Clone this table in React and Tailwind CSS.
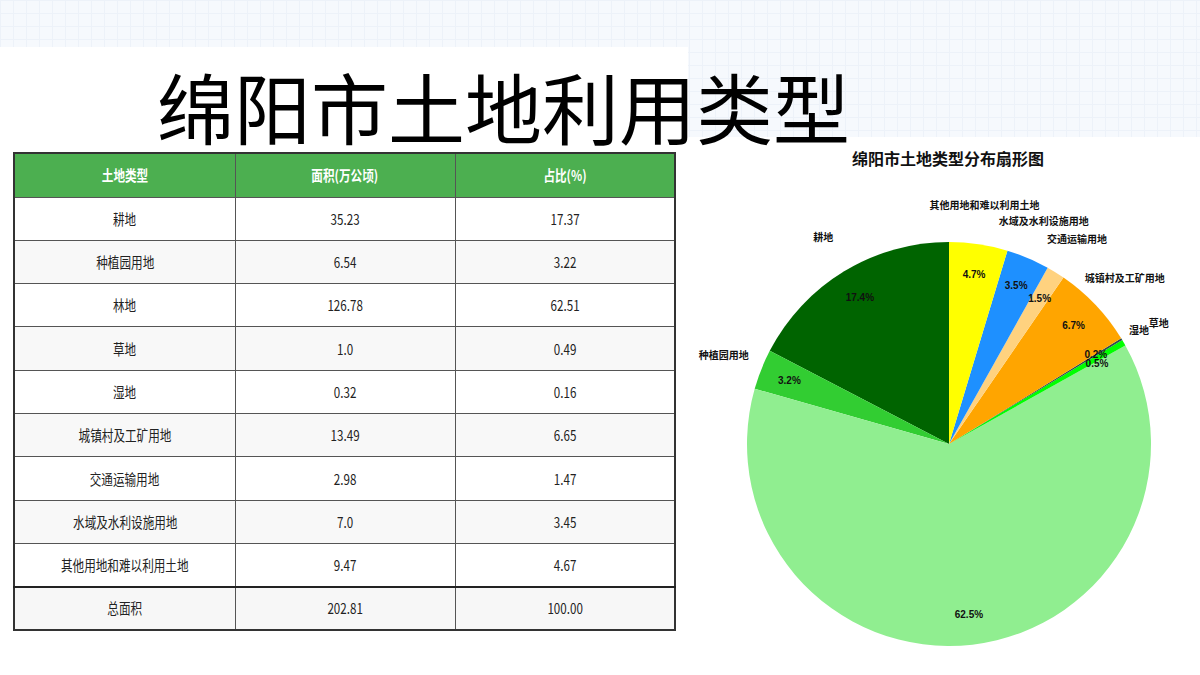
import React from "react";

const rows = [
  ["耕地", "35.23", "17.37"],
  ["种植园用地", "6.54", "3.22"],
  ["林地", "126.78", "62.51"],
  ["草地", "1.0", "0.49"],
  ["湿地", "0.32", "0.16"],
  ["城镇村及工矿用地", "13.49", "6.65"],
  ["交通运输用地", "2.98", "1.47"],
  ["水域及水利设施用地", "7.0", "3.45"],
  ["其他用地和难以利用土地", "9.47", "4.67"],
];

const slices = [
  { name: "耕地", v: 17.37, color: "#006400", pct: "17.4%" },
  { name: "种植园用地", v: 3.22, color: "#32cd32", pct: "3.2%" },
  { name: "林地", v: 62.51, color: "#90ee90", pct: "62.5%", noLabel: true },
  { name: "草地", v: 0.49, color: "#00ff00", pct: "0.5%", pctPos: [409, 226] },
  { name: "湿地", v: 0.16, color: "#2f4f4f", pct: "0.2%", labelPos: [451, 192] },
  { name: "城镇村及工矿用地", v: 6.65, color: "#ffa500", pct: "6.7%" },
  { name: "交通运输用地", v: 1.47, color: "#ffd27f", pct: "1.5%" },
  { name: "水域及水利设施用地", v: 3.45, color: "#1e90ff", pct: "3.5%" },
  { name: "其他用地和难以利用土地", v: 4.67, color: "#ffff00", pct: "4.7%" },
];

function Pie() {
  const cx = 261;
  const cy = 307;
  const r = 202;
  const total = slices.reduce((s, d) => s + d.v, 0);
  let a = 90;
  const pt = (deg, rad) => {
    const t = (deg * Math.PI) / 180;
    return [cx + rad * Math.cos(t), cy - rad * Math.sin(t)];
  };
  const items = slices.map((d) => {
    const span = (d.v / total) * 360;
    const a1 = a;
    const a2 = a + span;
    a = a2;
    const [x1, y1] = pt(a1, r);
    const [x2, y2] = pt(a2, r);
    const large = span > 180 ? 1 : 0;
    const path = `M ${cx} ${cy} L ${x1} ${y1} A ${r} ${r} 0 ${large} 0 ${x2} ${y2} Z`;
    const mid = (a1 + a2) / 2;
    const lp = d.labelPos || pt(mid, r * 1.2);
    const pp = d.pctPos || pt(mid, r * 0.85);
    return { ...d, path, lp, pp };
  });
  return (
    <svg width="512" height="538" viewBox="0 0 512 538" className="block">
      <text
        x="260"
        y="21"
        textAnchor="middle"
        dominantBaseline="central"
        fontFamily="'Noto Sans CJK SC', sans-serif"
        fontWeight="700"
        fontSize="16"
        fill="#111"
      >
        绵阳市土地类型分布扇形图
      </text>
      {items.map((d) => (
        <path key={d.name} d={d.path} fill={d.color} />
      ))}
      {items
        .filter((d) => !d.noLabel)
        .map((d) => (
          <text
            key={d.name + "l"}
            x={d.lp[0]}
            y={d.lp[1]}
            textAnchor="middle"
            dominantBaseline="central"
            fontFamily="'Noto Sans CJK SC', sans-serif"
            fontWeight="700"
            fontSize="10"
            fill="#111"
          >
            {d.name}
          </text>
        ))}
      {items.map((d) => (
        <text
          key={d.name + "p"}
          x={d.pp[0]}
          y={d.pp[1]}
          textAnchor="middle"
          dominantBaseline="central"
          fontFamily="'Liberation Sans', Arial, sans-serif"
          fontWeight="700"
          fontSize="10"
          fill="#111"
        >
          {d.pct}
        </text>
      ))}
    </svg>
  );
}

function Cell({ children, head, className = "" }) {
  const Tag = head ? "th" : "td";
  return (
    <Tag
      className={
        "border border-[#555] p-0 text-center align-middle " +
        (head ? "font-bold text-white " : "font-normal text-[#222] ") +
        className
      }
    >
      <span className="inline-block scale-x-[0.8] whitespace-nowrap">{children}</span>
    </Tag>
  );
}

export default function App() {
  return (
    <div
      className="w-[1200px] h-[675px] overflow-hidden flex flex-col bg-[#f6f9fd] bg-[linear-gradient(to_right,#edf2f9_1px,transparent_1px),linear-gradient(to_bottom,#edf2f9_1px,transparent_1px)] bg-[size:13px_13px]"
      style={{ fontFamily: "'Noto Sans CJK SC', 'Noto Sans', sans-serif" }}
    >
      <div className="h-[47px] shrink-0" />
      <div className="flex flex-1">
        <div className="w-[688px] shrink-0 bg-white flex flex-col">
          <h1 className="relative z-10 mt-[20px] pl-[157px] text-[77px] leading-[77px] font-normal text-black whitespace-nowrap">
            绵阳市土地利用类型
          </h1>
          <div className="pl-[13px] mt-[8px]">
            <table className="w-[661px] border-collapse border-2 border-[#333] text-[14.5px] table-fixed">
              <colgroup>
                <col className="w-[221px]" />
                <col className="w-[220px]" />
                <col className="w-[220px]" />
              </colgroup>
              <thead>
                <tr className="h-[44px] bg-[#4caf50]">
                  <Cell head className="border-[#333]">土地类型</Cell>
                  <Cell head className="border-[#333]">面积(万公顷)</Cell>
                  <Cell head className="border-[#333]">占比(%)</Cell>
                </tr>
              </thead>
              <tbody>
                {rows.map((r, i) => (
                  <tr key={r[0]} className={"h-[43.3px] " + (i % 2 === 1 ? "bg-[#f8f8f8]" : "bg-white")}>
                    <Cell>{r[0]}</Cell>
                    <Cell>{r[1]}</Cell>
                    <Cell>{r[2]}</Cell>
                  </tr>
                ))}
                <tr className="h-[43.3px] bg-[#f7f7f7]">
                  <Cell className="border-t-2 border-t-[#222]">总面积</Cell>
                  <Cell className="border-t-2 border-t-[#222]">202.81</Cell>
                  <Cell className="border-t-2 border-t-[#222]">100.00</Cell>
                </tr>
              </tbody>
            </table>
          </div>
        </div>
        <div className="flex-1 flex flex-col">
          <div className="h-[90px] shrink-0" />
          <div className="flex-1 bg-white">
            <Pie />
          </div>
        </div>
      </div>
    </div>
  );
}
